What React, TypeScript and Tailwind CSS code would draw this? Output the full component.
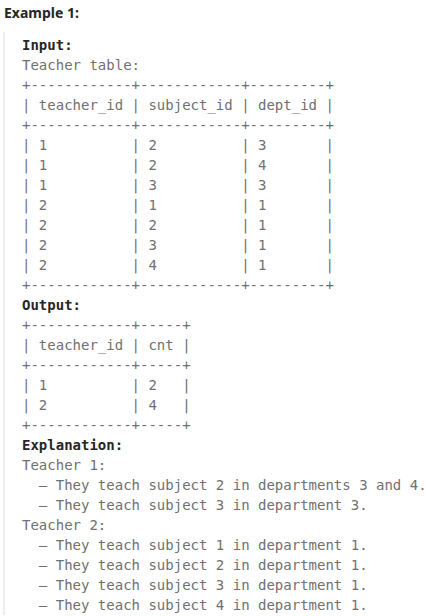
import React from "react";

const lines: { t: string; b?: boolean }[] = [
  { t: "Input:", b: true },
  { t: "Teacher table:" },
  { t: "+------------+------------+---------+" },
  { t: "| teacher_id | subject_id | dept_id |" },
  { t: "+------------+------------+---------+" },
  { t: "| 1          | 2          | 3       |" },
  { t: "| 1          | 2          | 4       |" },
  { t: "| 1          | 3          | 3       |" },
  { t: "| 2          | 1          | 1       |" },
  { t: "| 2          | 2          | 1       |" },
  { t: "| 2          | 3          | 1       |" },
  { t: "| 2          | 4          | 1       |" },
  { t: "+------------+------------+---------+" },
  { t: "Output:", b: true },
  { t: "+------------+-----+" },
  { t: "| teacher_id | cnt |" },
  { t: "+------------+-----+" },
  { t: "| 1          | 2   |" },
  { t: "| 2          | 4   |" },
  { t: "+------------+-----+" },
  { t: "Explanation:", b: true },
  { t: "Teacher 1:" },
  { t: "  – They teach subject 2 in departments 3 and 4." },
  { t: "  – They teach subject 3 in department 3." },
  { t: "Teacher 2:" },
  { t: "  – They teach subject 1 in department 1." },
  { t: "  – They teach subject 2 in department 1." },
  { t: "  – They teach subject 3 in department 1." },
  { t: "  – They teach subject 4 in department 1." },
];

export default function App() {
  return (
    <div className="w-[427px] h-[616px] bg-white overflow-hidden">
      <div
        className="pl-[4px] pt-[3px] h-[20px] leading-[20px] text-[14px] font-bold text-[#262626]"
        style={{ fontFamily: '"Noto Sans", "Open Sans", sans-serif' }}
      >
        Example 1:
      </div>
      <div
        className="mt-[12px] ml-[3px] border-l-2 border-[#eeeeee] pl-[17px] pt-[3px] text-[14px] leading-[20px] whitespace-pre text-[#707070]"
        style={{ fontFamily: '"DejaVu Sans Mono", monospace' }}
      >
        {lines.map((l, i) => (
          <div key={i} className={l.b ? "font-bold text-[#262626]" : ""}>
            {l.t}
          </div>
        ))}
      </div>
    </div>
  );
}
